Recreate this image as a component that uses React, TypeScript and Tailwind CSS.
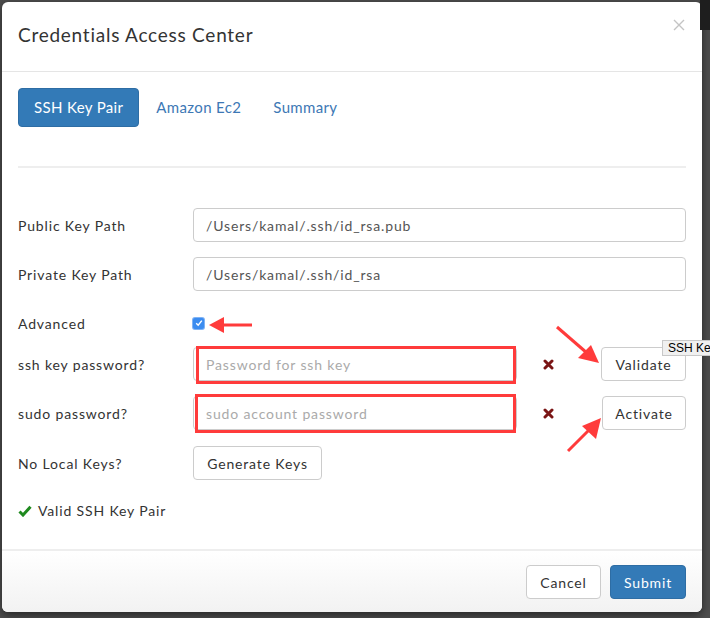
const font = { fontFamily: "Lato, 'Noto Sans', sans-serif" };

const XMark = () => (
  <svg width="11" height="11" viewBox="0 0 11 11">
    <path d="M2 2 L9 9 M9 2 L2 9" stroke="#7a1515" strokeWidth="3" strokeLinecap="round" />
  </svg>
);

const Row = ({ label, className, children }: any) => (
  <div className={"flex items-center " + (className || "")}>
    <div className="w-[175px] shrink-0 text-[14px] text-[#333]">{label}</div>
    {children}
  </div>
);

export default function App() {
  return (
    <div className="relative w-[710px] h-[618px] overflow-hidden bg-[#4d4d4d] tracking-[0.85px]" style={font}>
      <div className="absolute top-0 right-0 w-[10px] h-[30px] bg-[#1e1e1e]" />
      <div className="ml-[2px] mt-[2px] w-[700px] h-[610px] bg-white rounded-[6px] shadow-[0_3px_9px_rgba(0,0,0,0.5)] flex flex-col">
        {/* header */}
        <div className="h-[70px] shrink-0 border-b border-[#e5e5e5] flex items-center justify-between pl-[16px] pr-[17px]">
          <h4 className="text-[19px] text-[#333] tracking-[0.75px] mb-[2px]">Credentials Access Center</h4>
          <svg width="12" height="12" viewBox="0 0 12 12" className="-mt-[24px]">
            <path d="M1 1 L11 11 M11 1 L1 11" stroke="#c4c4c4" strokeWidth="1.4" />
          </svg>
        </div>

        {/* body */}
        <div className="flex-1 px-[16px] pt-[16px]">
          <div className="flex items-center gap-[2px] tracking-[0.35px]">
            <div className="h-[39px] px-[15px] flex items-center rounded-[4px] bg-[#337ab7] text-white text-[15px] border border-[#2e6da4]">SSH Key Pair</div>
            <div className="h-[39px] px-[15px] flex items-center text-[#3d78b5] text-[15px]">Amazon Ec2</div>
            <div className="h-[39px] px-[15px] flex items-center text-[#3d78b5] text-[15px]">Summary</div>
          </div>
          <div className="mt-[39px] border-t-2 border-[#eee]" />

          <Row label="Public Key Path" className="mt-[40px] h-[34px]">
            <div className="flex-1 h-[34px] border border-[#ccc] rounded-[4px] px-[12px] flex items-center text-[14px] text-[#555]">/Users/kamal/.ssh/id_rsa.pub</div>
          </Row>
          <Row label="Private Key Path" className="mt-[15px] h-[34px]">
            <div className="flex-1 h-[34px] border border-[#ccc] rounded-[4px] px-[12px] flex items-center text-[14px] text-[#555]">/Users/kamal/.ssh/id_rsa</div>
          </Row>
          <Row label="Advanced" className="mt-[22px] h-[20px]">
            <span className="w-[11px] h-[11px] rounded-[2px] bg-[#3b8cf0] flex items-center justify-center shadow-[0_0_0_1px_#7fb3f5]">
              <svg width="8" height="8" viewBox="0 0 8 8">
                <path d="M1.2 4.2 L3.2 6.2 L6.8 1.6" stroke="white" strokeWidth="1.4" fill="none" />
              </svg>
            </span>
          </Row>
          <Row label="ssh key password?" className="mt-[14px] h-[34px]">
            <div className="w-[324px] shrink-0 h-[34px] border border-[#ccc] rounded-[4px] px-[12px] flex items-center text-[14px] text-[#aaa]">Password for ssh key</div>
            <div className="ml-[20px] w-[22px] flex justify-center"><XMark /></div>
            <button className="h-[34px] w-[85px] border border-[#ccc] rounded-[4px] text-[14px] text-[#333] bg-white ml-auto">Validate</button>
          </Row>
          <Row label="sudo password?" className="mt-[15px] h-[34px]">
            <div className="w-[324px] shrink-0 h-[34px] border border-[#ccc] rounded-[4px] px-[12px] flex items-center text-[14px] text-[#aaa]">sudo account password</div>
            <div className="ml-[20px] w-[22px] flex justify-center"><XMark /></div>
            <button className="h-[34px] w-[84px] border border-[#ccc] rounded-[4px] text-[14px] text-[#333] bg-white ml-auto">Activate</button>
          </Row>
          <Row label="No Local Keys?" className="mt-[16px] h-[34px]">
            <button className="h-[34px] w-[129px] border border-[#ccc] rounded-[4px] text-[14px] text-[#333] bg-white">Generate Keys</button>
          </Row>
          <div className="mt-[20px] flex items-center gap-[6px] text-[14px] text-[#333]">
            <svg width="14" height="12" viewBox="0 0 14 12">
              <path d="M1.5 6.5 L5 10 L12.5 1.8" stroke="#1f8a1f" strokeWidth="3" fill="none" />
            </svg>
            Valid SSH Key Pair
          </div>
        </div>

        {/* footer */}
        <div className="h-[63px] shrink-0 border-t-2 border-[#eee] rounded-b-[6px] bg-gradient-to-b from-white to-[#f2f2f2] flex items-center justify-end gap-[9px] pr-[16px] pt-[1px]">
          <button className="h-[34px] w-[75px] border border-[#ccc] rounded-[4px] text-[14px] text-[#333] bg-white">Cancel</button>
          <button className="h-[34px] w-[76px] border border-[#2e6da4] rounded-[4px] text-[14px] text-white bg-[#337ab7]">Submit</button>
        </div>
      </div>

      {/* annotations */}
      <svg className="absolute inset-0 pointer-events-none" width="710" height="618">
        <rect x="197.5" y="347.5" width="317" height="35" fill="none" stroke="#ff3b3b" strokeWidth="3" />
        <rect x="196.5" y="395.5" width="318" height="36" fill="none" stroke="#ff3b3b" strokeWidth="3" />
        <path d="M252 325 L222 325" stroke="#ff3b3b" strokeWidth="3" />
        <path d="M209 325 L224 317 L224 333 Z" fill="#ff3b3b" />
        <path d="M557 327 L587 353" stroke="#ff3b3b" strokeWidth="3" />
        <path d="M599 363 L578 358 L591 345 Z" fill="#ff3b3b" />
        <path d="M568 451 L592 427" stroke="#ff3b3b" strokeWidth="3" />
        <path d="M601 418 L596 439 L582 426 Z" fill="#ff3b3b" />
      </svg>

      <div className="absolute left-[662px] top-[340px] h-[16px] pl-[5px] pr-[8px] bg-[#f0f0f0] border border-[#c8c8c8] text-[12px] leading-[14px] text-black whitespace-nowrap tracking-normal" style={{ fontFamily: "'Liberation Sans', Arial, sans-serif" }}>
        SSH Key Pair
      </div>
    </div>
  );
}
